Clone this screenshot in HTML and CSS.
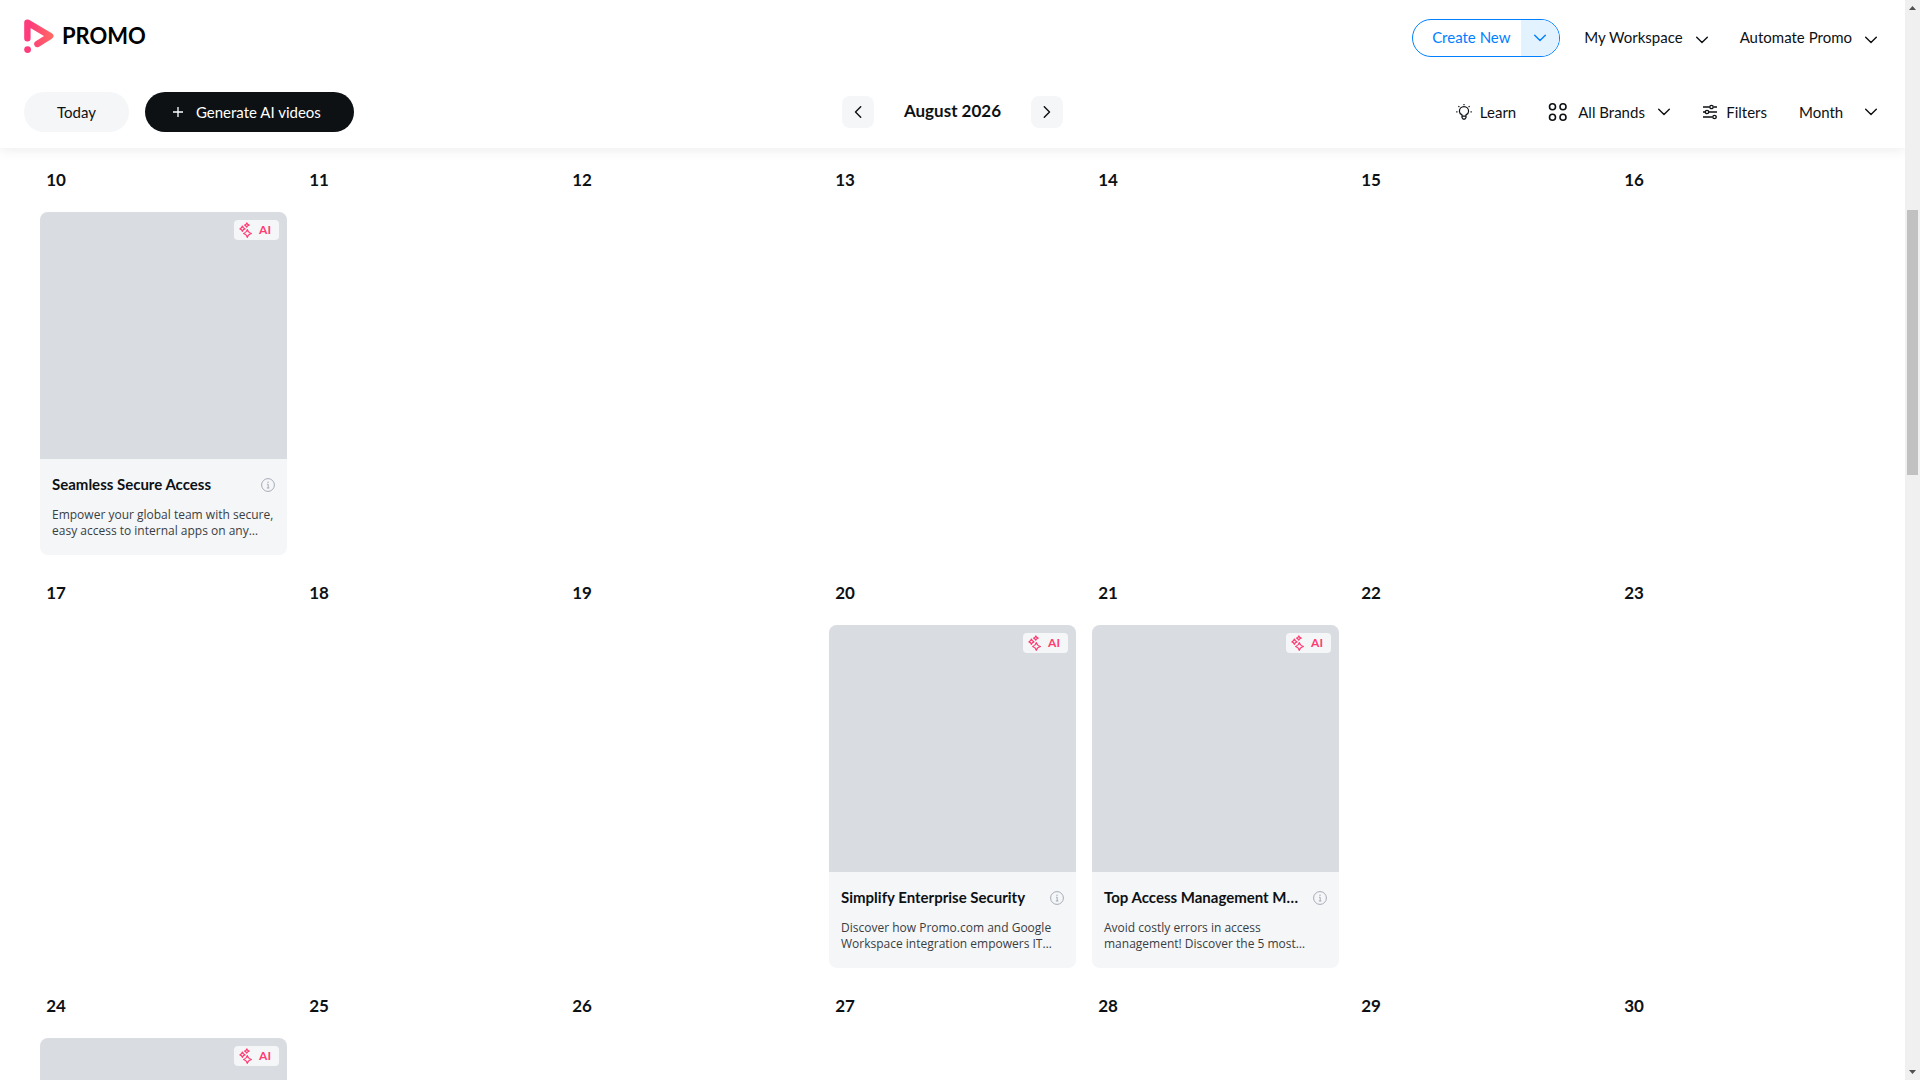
FILE: index.html
```html
<!DOCTYPE html>
<html lang="en">
<head>
    <meta charset="UTF-8">
    <title>Promo - Calendar</title>
    <link rel="stylesheet" href="styles.css">
</head>
<body>
    <!-- shared icons -->
    <svg class="sprite" aria-hidden="true">
        <symbol id="chevron" viewBox="0 0 12 12">
            <path d="M.7 3.3 6 8.5 11.3 3.3" fill="none" stroke="currentColor" stroke-width="1.4" stroke-linecap="round" stroke-linejoin="round"/>
        </symbol>
        <symbol id="sparkles" viewBox="0 0 14 16">
            <g fill="none" stroke="currentColor" stroke-width="1.2" stroke-linejoin="round">
                <path d="M8.3 7.6Q8.9 10.3 12.4 11.5Q8.9 12.5 8.3 15.3Q7.6 12.5 4.6 11.5Q7.6 10.3 8.3 7.6Z"/>
                <path d="M3.4 4Q3.9 6.3 6 6.8Q3.9 7.3 3.4 9.4Q2.9 7.3 .9 6.8Q2.9 6.3 3.4 4Z"/>
                <path d="M7.8 .9Q8.2 2.6 10.2 3.1Q8.2 3.6 7.8 5.2Q7.3 3.6 5.6 3.1Q7.3 2.6 7.8 .9Z"/>
            </g>
        </symbol>
        <symbol id="info" viewBox="0 0 14 14">
            <circle cx="7" cy="7" r="6.4" fill="none" stroke="currentColor"/>
            <path d="M6 6.3H7.2V10M5.8 10H8.4" fill="none" stroke="currentColor"/>
            <circle cx="7" cy="4.2" r=".7" fill="currentColor"/>
        </symbol>
    </svg>

    <div class="page">
        <header class="header">
            <div class="topbar">
                <a class="logo" href="#">
                    <svg width="30" height="34" viewBox="0 0 30 34" aria-hidden="true">
                        <defs>
                            <linearGradient id="logo-fill" x1="0" y1="0" x2="30" y2="0" gradientUnits="userSpaceOnUse">
                                <stop offset=".2" stop-color="#ff3c7c"/>
                                <stop offset="1" stop-color="#ff6c62"/>
                            </linearGradient>
                        </defs>
                        <path d="M3.4 19.2V3.6L26.2 17 13.4 25" fill="none" stroke="url(#logo-fill)" stroke-width="6.4" stroke-linecap="round" stroke-linejoin="round"/>
                        <circle cx="3.6" cy="30.6" r="3.4" fill="#ff3c7c"/>
                    </svg>
                    <span>PROMO</span>
                </a>
                <nav class="account">
                    <div class="create">
                        <button type="button" class="create-main">Create New</button>
                        <button type="button" class="create-more" aria-label="More options"><svg class="chevron"><use href="#chevron"/></svg></button>
                    </div>
                    <button type="button" class="menu-btn">My Workspace <svg class="chevron"><use href="#chevron"/></svg></button>
                    <button type="button" class="menu-btn">Automate Promo <svg class="chevron"><use href="#chevron"/></svg></button>
                </nav>
            </div>

            <div class="toolbar">
                <div class="actions">
                    <button type="button" class="pill">Today</button>
                    <button type="button" class="pill pill-dark">
                        <svg width="10" height="10" viewBox="0 0 10 10" aria-hidden="true"><path d="M5 0V10M0 5H10" stroke="currentColor" stroke-width="1.3"/></svg>
                        Generate AI videos
                    </button>
                </div>
                <div class="month-nav">
                    <button type="button" class="arrow" aria-label="Previous month"><svg class="chevron prev"><use href="#chevron"/></svg></button>
                    <h1>August 2026</h1>
                    <button type="button" class="arrow" aria-label="Next month"><svg class="chevron next"><use href="#chevron"/></svg></button>
                </div>
                <div class="filters">
                    <button type="button" class="tool">
                        <svg width="16" height="16" viewBox="0 0 16 16" aria-hidden="true">
                            <path d="M6 12.2V10.9Q3.4 9.7 3.4 7.2A4.6 4.6 0 0 1 12.6 7.2Q12.6 9.7 10 10.9V12.2ZM6 12.2V13.6L7.2 15.2H8.8L10 13.6V12.2M.2 7.8H1.5M14.5 7.8H15.8M8 0V1.2M2.4 2.2 3.4 3.2M13.6 2.2 12.6 3.2" fill="none" stroke="currentColor" stroke-width="1.2"/>
                        </svg>
                        Learn
                    </button>
                    <div class="brands">
                        <svg width="20" height="20" viewBox="0 0 20 20" aria-hidden="true">
                            <g fill="none" stroke="currentColor" stroke-width="1.6">
                                <circle cx="4.5" cy="4.8" r="3"/>
                                <circle cx="15" cy="4.8" r="3"/>
                                <circle cx="4.5" cy="15.2" r="3"/>
                                <circle cx="15" cy="15.2" r="3"/>
                            </g>
                        </svg>
                        <div class="select select-brand">
                            <select aria-label="Brand"><option>All Brands</option></select>
                            <svg class="chevron"><use href="#chevron"/></svg>
                        </div>
                    </div>
                    <button type="button" class="tool">
                        <svg width="16" height="16" viewBox="0 0 16 16" aria-hidden="true">
                            <path d="M1 3H7.5M11.5 3H15M1 8H3M7 8H15M1 13H10.5M14.5 13H15" fill="none" stroke="currentColor" stroke-width="1.4"/>
                            <g fill="none" stroke="currentColor" stroke-width="1.3">
                                <circle cx="9.5" cy="3" r="1.7"/>
                                <circle cx="5" cy="8" r="1.7"/>
                                <circle cx="12.5" cy="13" r="1.7"/>
                            </g>
                        </svg>
                        Filters
                    </button>
                    <div class="select select-view">
                        <select aria-label="View"><option>Month</option></select>
                        <svg class="chevron"><use href="#chevron"/></svg>
                    </div>
                </div>
            </div>
        </header>

        <main class="calendar">
            <div class="day">
                <span class="date">10</span>
                <article class="card">
                    <div class="thumb"><span class="badge"><svg width="14" height="16"><use href="#sparkles"/></svg>AI</span></div>
                    <div class="card-body">
                        <div class="card-head">
                            <h2>Seamless Secure Access</h2>
                            <svg class="info"><use href="#info"/></svg>
                        </div>
                        <p>Empower your global team with secure,<br>easy access to internal apps on any…</p>
                    </div>
                </article>
            </div>
            <div class="day"><span class="date">11</span></div>
            <div class="day"><span class="date">12</span></div>
            <div class="day"><span class="date">13</span></div>
            <div class="day"><span class="date">14</span></div>
            <div class="day"><span class="date">15</span></div>
            <div class="day"><span class="date">16</span></div>

            <div class="day"><span class="date">17</span></div>
            <div class="day"><span class="date">18</span></div>
            <div class="day"><span class="date">19</span></div>
            <div class="day">
                <span class="date">20</span>
                <article class="card">
                    <div class="thumb"><span class="badge"><svg width="14" height="16"><use href="#sparkles"/></svg>AI</span></div>
                    <div class="card-body">
                        <div class="card-head">
                            <h2>Simplify Enterprise Security</h2>
                            <svg class="info"><use href="#info"/></svg>
                        </div>
                        <p>Discover how Promo.com and Google<br>Workspace integration empowers IT…</p>
                    </div>
                </article>
            </div>
            <div class="day">
                <span class="date">21</span>
                <article class="card">
                    <div class="thumb"><span class="badge"><svg width="14" height="16"><use href="#sparkles"/></svg>AI</span></div>
                    <div class="card-body">
                        <div class="card-head">
                            <h2>Top Access Management M…</h2>
                            <svg class="info"><use href="#info"/></svg>
                        </div>
                        <p>Avoid costly errors in access<br>management! Discover the 5 most…</p>
                    </div>
                </article>
            </div>
            <div class="day"><span class="date">22</span></div>
            <div class="day"><span class="date">23</span></div>

            <div class="day">
                <span class="date">24</span>
                <article class="card">
                    <div class="thumb"><span class="badge"><svg width="14" height="16"><use href="#sparkles"/></svg>AI</span></div>
                </article>
            </div>
            <div class="day"><span class="date">25</span></div>
            <div class="day"><span class="date">26</span></div>
            <div class="day"><span class="date">27</span></div>
            <div class="day"><span class="date">28</span></div>
            <div class="day"><span class="date">29</span></div>
            <div class="day"><span class="date">30</span></div>
        </main>
    </div>

    <div class="scrollbar" aria-hidden="true">
        <svg width="7" height="4" viewBox="0 0 7 4"><path d="M0 4 3.5 0 7 4Z" fill="currentColor"/></svg>
        <div class="track"><div class="thumb-bar"></div></div>
        <svg width="7" height="4" viewBox="0 0 7 4"><path d="M0 0 3.5 4 7 0Z" fill="currentColor"/></svg>
    </div>
</body>
</html>
```
FILE: styles.css
```css
/*reset*/
* {
    box-sizing: border-box;
    margin: 0;
    padding: 0;
}
button, select {
    font: inherit;
    color: inherit;
    background: none;
    border: none;
    appearance: none;
    cursor: pointer;
}
svg {
    display: block;
    flex: none;
}

/*default*/
body {
    display: flex;
    height: 100vh;
    overflow: hidden;
    font: 15px/20px Lato, sans-serif;
    color: #0d1114;
    background-color: #fff;
}
.sprite {
    position: absolute;
    width: 0;
    height: 0;
}
.chevron {
    width: 12px;
    height: 12px;
}
.page {
    flex: 1;
    min-width: 0;
    display: flex;
    flex-direction: column;
}

/*header*/
.header {
    flex: none;
    padding: 16px 24px;
    box-shadow: 0 2px 12px rgba(0, 0, 0, 0.08);
}
.topbar {
    display: flex;
    justify-content: space-between;
    height: 76px;
}
.logo {
    display: flex;
    align-items: center;
    gap: 8px;
    height: 40px;
    font-size: 22px;
    font-weight: 700;
    color: #000;
    text-decoration: none;
}
.account {
    display: flex;
    align-items: center;
    gap: 24px;
    height: 44px;
}
.create {
    display: flex;
    height: 38px;
    border: 1px solid #0080ff;
    border-radius: 20px;
    color: #0080ff;
    overflow: hidden;
}
.create-main {
    width: 108px;
    padding: 0 0 2px 8px;
}
.create-more {
    display: flex;
    align-items: center;
    justify-content: center;
    width: 38px;
    background-color: #e3f2ff;
}
.menu-btn {
    display: flex;
    align-items: center;
    gap: 13px;
    padding: 0 8px 2px 0;
}
.menu-btn .chevron {
    margin-top: 6px;
}
.account .menu-btn:last-child {
    padding-right: 4px;
}

.toolbar {
    display: grid;
    grid-template-columns: 1fr auto 1fr;
    align-items: center;
    height: 40px;
}
.actions {
    display: flex;
    gap: 16px;
}
.pill {
    display: flex;
    align-items: center;
    gap: 13px;
    height: 40px;
    padding: 0 33px;
    border-radius: 20px;
    background-color: #f4f6f8;
}
.pill-dark {
    padding-left: 28px;
    color: #fff;
    background-color: #0d1114;
}
.month-nav {
    display: flex;
    align-items: center;
    gap: 30px;
}
.month-nav h1 {
    padding-bottom: 2px;
    font-size: 17px;
    font-weight: 700;
}
.arrow {
    display: flex;
    align-items: center;
    justify-content: center;
    width: 32px;
    height: 32px;
    border-radius: 8px;
    background-color: #f4f6f8;
}
.prev {
    transform: rotate(90deg);
}
.next {
    transform: rotate(-90deg);
}
.filters {
    display: flex;
    align-items: center;
    justify-content: flex-end;
    gap: 32px;
    padding-right: 4px;
}
.tool {
    display: flex;
    align-items: center;
    gap: 8px;
}
.brands {
    display: flex;
    align-items: center;
    gap: 10px;
}
.select {
    display: grid;
    align-items: center;
}
.select select, .select .chevron {
    grid-area: 1 / 1;
}
.select select {
    width: 100%;
}
.select .chevron {
    justify-self: end;
    pointer-events: none;
}
.select-brand {
    width: 92px;
}
.select-view {
    width: 78px;
}

/*calendar*/
.calendar {
    flex: 1;
    min-height: 0;
    display: grid;
    grid-template-columns: repeat(7, minmax(0, 1fr));
    align-content: start;
    padding: 10px 32px 0;
    overflow: hidden;
}
.day {
    padding: 6px 8px 16px;
}
.date {
    display: block;
    width: 32px;
    margin-bottom: 16px;
    font-size: 17px;
    font-weight: 700;
    line-height: 32px;
    text-align: center;
}
.card {
    border-radius: 8px;
    background-color: #f4f6f8;
    overflow: hidden;
}
.thumb {
    display: flex;
    justify-content: flex-end;
    align-items: flex-start;
    aspect-ratio: 1;
    padding: 8px;
    background-color: #d9dce1;
}
.badge {
    display: flex;
    align-items: center;
    gap: 6px;
    height: 20px;
    padding: 0 8px 0 5px;
    border-radius: 4px;
    font-size: 12px;
    font-weight: 700;
    color: #ff3c72;
    background-color: #f4f6f8;
}
.card-body {
    height: 96px;
    padding: 16px 12px;
}
.card-head {
    display: flex;
    align-items: center;
    justify-content: space-between;
    height: 20px;
    margin-bottom: 12px;
}
.card-head h2 {
    padding-bottom: 2px;
    font-size: 15px;
    font-weight: 700;
    white-space: nowrap;
}
.info {
    width: 14px;
    height: 14px;
    color: #a5aab5;
}
.card p {
    font: 12px/16px "Open Sans", sans-serif;
    color: #3a3d42;
    white-space: nowrap;
}

/*scrollbar*/
.scrollbar {
    display: flex;
    flex-direction: column;
    align-items: center;
    justify-content: space-between;
    width: 15px;
    padding: 6px 0;
    color: #505050;
    background-color: #f0f0f0;
}
.track {
    flex: 1;
    width: 11px;
    padding-top: 200px;
}
.thumb-bar {
    height: 265px;
    background-color: #c1c1c1;
}
```
